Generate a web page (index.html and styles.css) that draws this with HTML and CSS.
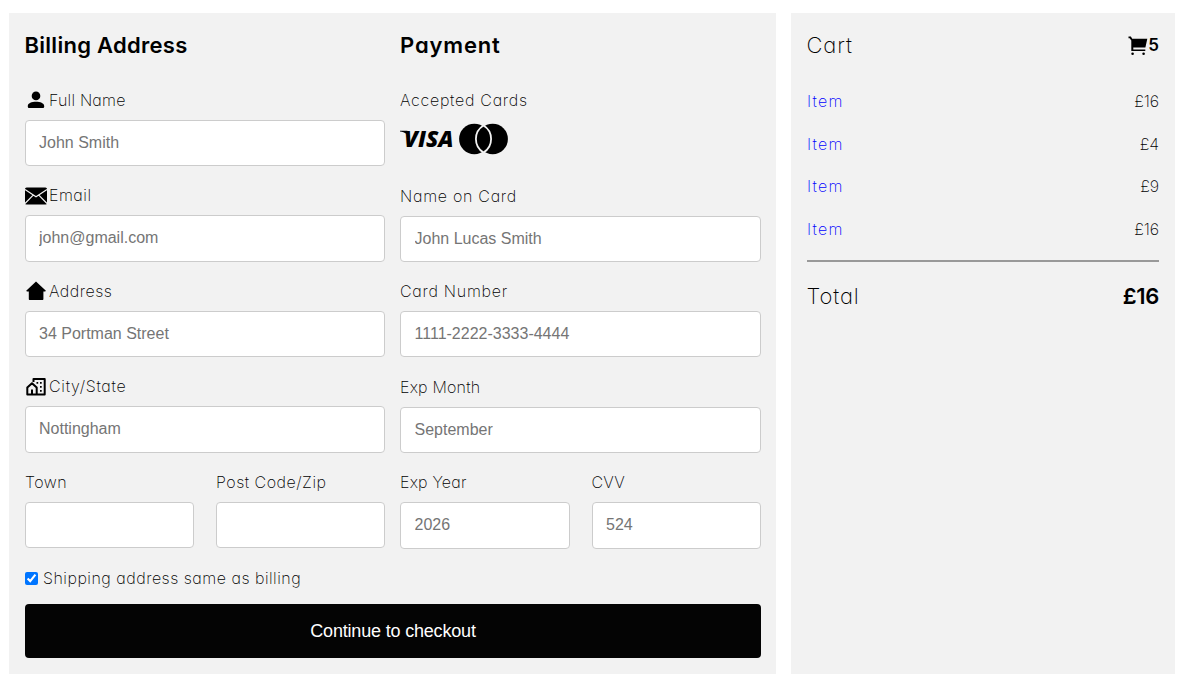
FILE: index.html
```html
<!DOCTYPE html>
<html lang="en">
<head>
<meta charset="utf-8">
<title>Checkout</title>
<link rel="stylesheet" href="styles.css">
</head>
<body>
<main class="page">
  <form class="panel checkout">
    <div class="columns">
      <section class="column">
        <h2 class="heading">Billing Address</h2>
        <div class="field">
          <label class="label" for="name"><svg class="icon" viewBox="0 0 24 24"><circle cx="12" cy="7.9" r="4.3"/><path d="M3.8 20v-2.100c0-2.800 4-4.200 8.200-4.200s8.200 1.400 8.200 4.200V18.800q0 1.200-1.200 1.200H5q-1.200 0-1.200-1.200z"/></svg><span class="snug">Full Name</span></label>
          <input class="input" id="name" type="text" placeholder="John Smith">
        </div>
        <div class="field">
          <label class="label" for="email"><svg class="icon" viewBox="0 0 24 24"><rect x="1" y="3.5" width="22" height="17" rx="1.6"/><path class="cut" d="M1 5.500l11 7.300 11-7.300M1 19.500l8.200-8.300M23 19.500l-8.200-8.300"/></svg><span>Email</span></label>
          <input class="input" id="email" type="text" placeholder="john@gmail.com">
        </div>
        <div class="field">
          <label class="label" for="address"><svg class="icon" viewBox="0 0 24 24"><path d="M12 2.600L2.200 11.700l.7.900h1.900V20c0 .7.400 1 1 1h12.600c.6 0 1-.3 1-1v-7.400h1.800l.7-.9z"/></svg><span>Address</span></label>
          <input class="input" id="address" type="text" placeholder="34 Portman Street">
        </div>
        <div class="field">
          <label class="label" for="city"><svg class="icon" viewBox="0 0 24 24"><path class="line" d="M9.500 7V4h11.200v15.500H3.300v-7L8 8.200l4.700 4.300v7M8 19.500v-5"/><path d="M12.500 7h1.700v1.700h-1.700zM16 7h1.700v1.700H16zM16 11h1.700v1.700H16zM16 15h1.700v1.700H16z"/></svg><span class="wide">City/State</span></label>
          <input class="input" id="city" type="text" placeholder="Nottingham">
        </div>
        <div class="pair">
          <div class="field"><label class="label" for="town"><span>Town</span></label><input class="input" id="town" type="text"></div>
          <div class="field"><label class="label" for="zip"><span>Post Code/Zip</span></label><input class="input" id="zip" type="text"></div>
        </div>
      </section>
      <section class="column payment">
        <h2 class="heading loose">Payment</h2>
        <div class="field">
          <div class="label"><span class="wide">Accepted Cards</span></div>
          <svg class="cards" viewBox="0 0 110 34"><path d="M0 7.800h6.600c1 0 1.600.6 1.800 1.500L10 15C8.500 11.500 5 9 0 8.400z"/><text class="visa" x="4" y="24.300" textLength="49.500" lengthAdjust="spacingAndGlyphs">VISA</text><circle cx="74.300" cy="16" r="15.200"/><circle cx="92.700" cy="16" r="15.200"/><path class="lens" d="M83.500 2.500a15.800 15.800 0 0 1 0 27a15.800 15.800 0 0 1 0-27z"/></svg>
        </div>
        <div class="field">
          <label class="label" for="card-name"><span class="wide">Name on Card</span></label>
          <input class="input" id="card-name" type="text" placeholder="John Lucas Smith">
        </div>
        <div class="field">
          <label class="label" for="card-number"><span class="wide">Card Number</span></label>
          <input class="input" id="card-number" type="text" placeholder="1111-2222-3333-4444">
        </div>
        <div class="field">
          <label class="label" for="month"><span class="snug">Exp Month</span></label>
          <input class="input" id="month" type="text" placeholder="September">
        </div>
        <div class="pair">
          <div class="field"><label class="label" for="year"><span class="snug">Exp Year</span></label><input class="input" id="year" type="text" placeholder="2026"></div>
          <div class="field"><label class="label" for="cvv"><span class="snug">CVV</span></label><input class="input" id="cvv" type="text" placeholder="524"></div>
        </div>
      </section>
    </div>
    <label class="same"><input class="check" type="checkbox" checked><span>Shipping address same as billing</span></label>
    <button class="submit" type="button">Continue to checkout</button>
  </form>
  <aside class="panel cart">
    <div class="cart-head"><span class="big">Cart</span><span class="count"><svg class="cart-icon" viewBox="0 0 20 20"><path d="M.5.500h2.400l1.300 2.200h15.100l-1.900 8.800H5.300v2h12v1.400H3.300V4.500L1.700 2.200H.5z"/><circle cx="4.600" cy="17.700" r="1.300"/><circle cx="15.600" cy="17.700" r="1.300"/></svg><b>5</b></span></div>
    <div class="item"><a class="link" href="#">Item</a><span class="price">£16</span></div>
    <div class="item"><a class="link" href="#">Item</a><span class="price">£4</span></div>
    <div class="item"><a class="link" href="#">Item</a><span class="price">£9</span></div>
    <div class="item"><a class="link" href="#">Item</a><span class="price">£16</span></div>
    <div class="total"><span class="big">Total</span><b class="sum">£16</b></div>
  </aside>
</main>
</body>
</html>
```
FILE: styles.css
```css
* { box-sizing: border-box; }
body {
  margin: 0;
  background: #fff;
  color: #000;
  font-family: Inter, "Open Sans", sans-serif;
  font-size: 16px;
  font-weight: 250;
  font-feature-settings: "cv11", "ss03";
  letter-spacing: .5px;
}
.page { display: flex; gap: 15px; padding: 13px 17px 0 9px; }
.panel { background: #f2f2f2; height: 661px; padding: 16px 15px 16px 16px; }
.checkout { width: 767px; }
.cart { width: 384px; padding-right: 16px; }
.columns { display: grid; grid-template-columns: 360px 361px; gap: 15px; height: 532px; }
.heading { margin: 0 0 26.4px; height: 32px; line-height: 32px; font-size: 22px; font-weight: 600; letter-spacing: .28px; text-indent: -.5px; }
.loose { letter-spacing: .85px; text-indent: 0; }
.field { height: 95.5px; }
.payment > .field:nth-of-type(1) { height: 96px; }
.label { display: flex; align-items: center; height: 25px; margin-bottom: 7.4px; white-space: nowrap; }
.snug { letter-spacing: .2px; }
.wide { letter-spacing: .72px; }
.icon { width: 24px; height: 24px; margin: 1px 1px 0 -1px; flex: none; }
.cut { fill: none; stroke: #f2f2f2; stroke-width: 1.2; }
.line { fill: none; stroke: #000; stroke-width: 2; stroke-linejoin: round; }
.input {
  display: block;
  width: 100%;
  height: 46.4px;
  padding: 0 13px;
  border: 1px solid #ccc;
  border-radius: 4px;
  background: #fff;
  font: 16px "Liberation Sans", Arial, sans-serif;
}
.payment .input { height: 46.1px; padding-left: 13.5px; }
.payment .pair .input { height: 46.4px; }
.input::placeholder { color: #757575; }
.pair { display: grid; grid-template-columns: 1fr 1fr; gap: 22px; }
.cards { display: block; width: 110px; height: 34px; margin-top: 11px; }
.visa { font: italic 800 23px "Open Sans", sans-serif; letter-spacing: 0; }
.lens { stroke: #f2f2f2; stroke-width: 1.8; }
.same { display: flex; align-items: center; height: 34px; gap: 5px; }
.check { width: 13px; height: 13px; margin: 0; }
.submit {
  display: block;
  width: 100%;
  height: 54px;
  margin-top: 9px;
  border: 0;
  border-radius: 4px;
  background: #040404;
  color: #fff;
  font: 18px "Liberation Sans", Arial, sans-serif;
  letter-spacing: -.18px;
}
.cart-head { display: flex; justify-content: space-between; align-items: center; height: 32px; margin-bottom: 19px; }
.big { font-size: 22px; letter-spacing: .9px; margin-left: -.5px; }
.count { display: flex; align-items: center; gap: .5px; font-size: 17px; letter-spacing: 0; }
.cart-icon { width: 20px; height: 20px; margin-top: 1px; }
b { font-weight: 600; letter-spacing: 0; }
.item { display: flex; justify-content: space-between; align-items: center; height: 42.6px; }
.price { letter-spacing: -.1px; }
.link { color: #00f; text-decoration: none; letter-spacing: 1.2px; }
.total { display: flex; justify-content: space-between; align-items: center; height: 70px; margin-top: 10px; border-top: 2px solid #999; }
.sum { font-size: 22px; letter-spacing: -.3px; }
```
